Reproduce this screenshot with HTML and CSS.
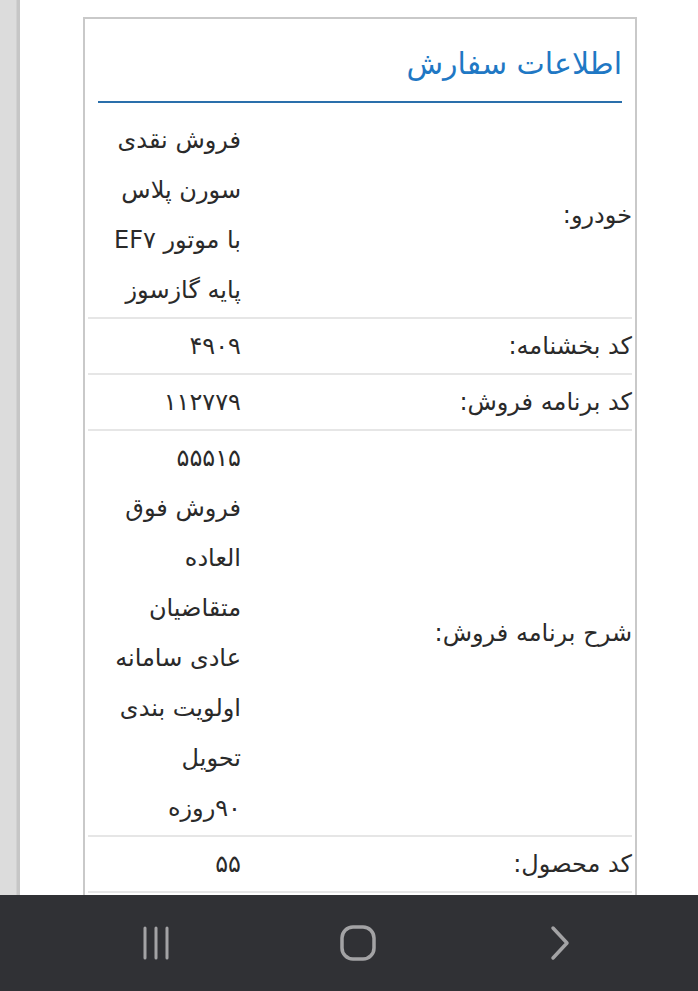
FILE: index.html
```html
<!DOCTYPE html>
<html lang="fa" dir="rtl">
<head>
<meta charset="utf-8">
<title>اطلاعات سفارش</title>
<link rel="stylesheet" href="styles.css">
</head>
<body>
<div class="page">
  <main class="main">
    <section class="card">
      <h2 class="card-title">اطلاعات سفارش</h2>
      <table class="info">
        <tr class="row-first">
          <th>خودرو:</th>
          <td>فروش نقدی<br>سورن پلاس<br>با موتور EF۷<br>پایه گازسوز</td>
        </tr>
        <tr>
          <th>کد بخشنامه:</th>
          <td>۴۹۰۹</td>
        </tr>
        <tr>
          <th>کد برنامه فروش:</th>
          <td>۱۱۲۷۷۹</td>
        </tr>
        <tr>
          <th>شرح برنامه فروش:</th>
          <td>۵۵۵۱۵<br>فروش فوق<br>العاده<br>متقاضیان<br>عادی سامانه<br>اولویت بندی<br>تحویل<br>۹۰روزه</td>
        </tr>
        <tr>
          <th>کد محصول:</th>
          <td>۵۵</td>
        </tr>
        <tr>
          <th>رنگ:</th>
          <td>سفید</td>
        </tr>
      </table>
    </section>
  </main>
  <aside class="side"></aside>
</div>
<nav class="sysnav">
  <svg class="nav-icon" width="40" height="40" viewBox="0 0 40 40"><g stroke="#a3a3a5" stroke-width="3" stroke-linecap="round"><line x1="9" y1="5" x2="9" y2="35"/><line x1="20" y1="5" x2="20" y2="35"/><line x1="31" y1="5" x2="31" y2="35"/></g></svg>
  <svg class="nav-icon" width="40" height="40" viewBox="0 0 40 40"><rect x="4" y="4" width="32" height="32" rx="11" fill="none" stroke="#a3a3a5" stroke-width="3.5"/></svg>
  <svg class="nav-icon" width="40" height="40" viewBox="0 0 40 40"><polyline points="13,5 27,20 13,35" fill="none" stroke="#a3a3a5" stroke-width="3.5" stroke-linecap="round" stroke-linejoin="round"/></svg>
</nav>
</body>
</html>
```

FILE: styles.css
```css
html, body {
  margin: 0;
  padding: 0;
  background: #ffffff;
  font-family: "DejaVu Sans", "Noto Sans", sans-serif;
  color: #222222;
}

.page {
  display: flex;
  flex-direction: row;
  min-height: 991px;
}

.side {
  width: 20px;
  flex: none;
  background: linear-gradient(to right, #dcdcdc 0, #dcdcdc 16px, #c6c6c6 17px, #c6c6c6 20px);
}

.main {
  flex: 1;
  padding: 17px 61px 0 63px;
}

.card {
  border: 2px solid #c9c9c9;
  border-bottom: none;
  background: #ffffff;
  padding: 0 3px;
}

.card-title {
  margin: 0 10px;
  padding: 25px 0 17px;
  font-size: 30px;
  font-weight: normal;
  color: #1f78c4;
  line-height: 40px;
  border-bottom: 2px solid #2a6fab;
}

.info {
  width: 100%;
  border-collapse: collapse;
  margin-top: 12px;
  font-size: 24px;
}

.info th,
.info td {
  padding: 2px 0;
  line-height: 50px;
  border-bottom: 2px solid #e6e6e6;
  vertical-align: middle;
  font-weight: normal;
  color: #2a2a2a;
}

.info th {
  text-align: right;
}

.info td {
  width: 153px;
  text-align: right;
}

.row-first th,
.row-first td {
  padding-top: 0;
}

.sysnav {
  position: fixed;
  left: 0;
  right: 0;
  bottom: 0;
  height: 96px;
  background: #303135;
  display: flex;
  flex-direction: row-reverse;
  justify-content: space-between;
  align-items: center;
  padding: 0 118px 0 136px;
  box-sizing: border-box;
}

.nav-icon {
  display: block;
}
```
